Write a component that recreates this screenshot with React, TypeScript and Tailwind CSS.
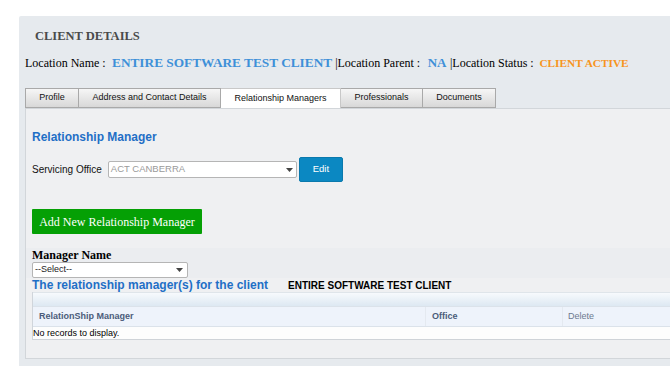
import React from "react";

const serif = "font-['Liberation_Serif','Times_New_Roman',serif]";
const sans = "font-['Liberation_Sans',Arial,sans-serif]";

function Caret() {
  return (
    <svg width="7" height="4" viewBox="0 0 7 4" className="shrink-0">
      <path d="M0 0 L7 0 L3.5 4 Z" fill="#444" />
    </svg>
  );
}

export default function App() {
  const tabs = [
    { label: "Profile", w: "w-[54px]" },
    { label: "Address and Contact Details", w: "w-[142px]" },
    { label: "Relationship Managers", w: "w-[120px]", active: true },
    { label: "Professionals", w: "w-[82px]" },
    { label: "Documents", w: "w-[73px]" },
  ];
  return (
    <div className={`w-[670px] h-[374px] overflow-hidden bg-white ${sans}`}>
      <div className="ml-[19px] mt-[16px] w-[720px] h-[350px] bg-[#e6eaee] pt-[13px] rounded-tl-[2px]">
        <div className={`pl-[16px] ${serif} font-bold text-[12.5px] leading-[15px] text-[#4a4a4a]`}>
          CLIENT DETAILS
        </div>
        <div className={`mt-[11px] pl-[6px] h-[16px] leading-[16px] text-[12px] text-black whitespace-nowrap ${serif}`}>
          <span>Location Name :</span>
          <span className="ml-[6.4px] text-[13.3px] font-bold text-[#3e90d8]">ENTIRE SOFTWARE TEST CLIENT</span>
          <span className="ml-[3px]">|Location Parent :</span>
          <span className="ml-[7.5px] text-[13px] font-bold text-[#3e90d8]">NA</span>
          <span className="ml-[3.5px]">|Location Status :</span>
          <span className="ml-[5.7px] text-[11.3px] font-bold text-[#f7941d]">CLIENT ACTIVE</span>
        </div>
        <div className="mt-[17px] ml-[6px] flex h-[20px]">
          {tabs.map((t, i) => (
            <div
              key={t.label}
              className={`${t.w} h-[20px] flex items-center justify-center text-[9px] text-[#111] ${
                i === 0 ? "border-l" : ""
              } ${
                t.active
                  ? "bg-white border-t border-r border-[#c8c8c8]"
                  : "border-t border-r border-b border-[#a9a9a9] bg-linear-to-b from-[#f6f6f6] to-[#d8d8d8]"
              }`}
            >
              {t.label}
            </div>
          ))}
        </div>
        <div className="ml-[6px] h-[251px] border-t border-l border-b border-[#d2d6da] bg-[#eff0f2] pt-[21px]">
          <div className="pl-[6px] text-[12px] leading-[14px] font-bold text-[#1f6fc6]">Relationship Manager</div>
          <div className="mt-[13px] pl-[6px] flex items-center h-[25px]">
            <span className="text-[10px] text-[#111]">Servicing Office</span>
            <div className="ml-[6px] w-[189px] h-[17px] bg-white border border-[#b5b5b5] rounded-[2px] flex items-center justify-between pl-[2px] pr-[3px]">
              <span className="text-[9.5px] text-[#9a9a9a]">ACT CANBERRA</span>
              <Caret />
            </div>
            <div className="ml-[2px] w-[44px] h-[25px] bg-[#0b88c2] border border-[#0a79ad] rounded-[2px] flex items-center justify-center text-white text-[9.5px]">
              Edit
            </div>
          </div>
          <div className="mt-[27px] pl-[6px]">
            <div className={`w-[170px] h-[25px] bg-[#05a005] rounded-[1px] flex items-center justify-center text-white text-[12px] ${serif}`}>
              Add New Relationship Manager
            </div>
          </div>
          <div className="mt-[14px] bg-[#ebedf0] pl-[6px] h-[30px]">
            <div className={`${serif} font-bold text-[12px] leading-[14px] text-black`}>Manager Name</div>
            <div className="w-[156px] h-[16px] bg-white border border-[#b5b5b5] rounded-[2px] flex items-center justify-between pl-[2px] pr-[4px]">
              <span className="text-[9px] text-[#222]">--Select--</span>
              <Caret />
            </div>
          </div>
          <div className="pl-[6px] flex items-baseline h-[14px] whitespace-nowrap">
            <span className="text-[12px] leading-[14px] font-bold text-[#1f6fc6]">The relationship manager(s) for the client</span>
            <span className="ml-[20px] text-[10px] font-bold text-black">ENTIRE SOFTWARE TEST CLIENT</span>
          </div>
          <div className="ml-[6px] border-l border-[#d0d5db]">
            <div className="h-[14px] border-t border-[#dfe5ea] bg-linear-to-b from-[#f7fafd] to-[#dde8f2]" />
            <div className="h-[21px] flex items-center bg-[#eef3fb] border-t border-b border-[#dbe2ea] text-[9px]">
              <div className="w-[393px] pl-[6px] font-bold text-[#4b5c7a] h-full flex items-center border-r border-[#e4e9f0]">RelationShip Manager</div>
              <div className="w-[137px] pl-[6px] font-bold text-[#4b5c7a] h-full flex items-center border-r border-[#e4e9f0]">Office</div>
              <div className="pl-[5px] text-[#6d7a90] h-full flex items-center">Delete</div>
            </div>
            <div className="h-[13px] bg-[#fdfdfd] border-b border-[#cfd3d8] text-[9px] leading-[12px] text-black pl-[0px]">
              No records to display.
            </div>
          </div>
        </div>
      </div>
    </div>
  );
}
